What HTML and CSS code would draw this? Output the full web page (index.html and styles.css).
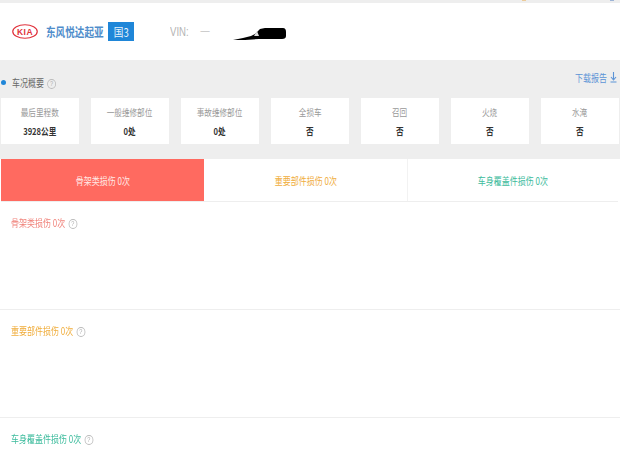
FILE: index.html
```html
<!DOCTYPE html>
<html lang="zh">
<head>
<meta charset="utf-8">
<title>车况概要</title>
<link rel="stylesheet" href="styles.css">
</head>
<body>
<div class="page">
  <div class="strip"><span class="mark mark-orange"></span><span class="mark mark-blue"></span></div>
  <header class="head">
    <svg class="logo" viewBox="0 0 52 30" width="26" height="15">
      <ellipse cx="26" cy="15" rx="24.5" ry="13.5" fill="none" stroke="#e0323c" stroke-width="2.4"/>
      <text x="26" y="22" text-anchor="middle" class="logo-text">KIA</text>
    </svg>
    <span class="brand"><span class="sq sq-left">东风悦达起亚</span></span>
    <span class="tag"><span class="sq">国3</span></span>
    <span class="vin"><span class="sq sq-left">VIN:</span></span>
    <span class="dash">一</span>
    <svg class="blot" viewBox="0 0 54 14" width="54" height="14">
      <path d="M0 13 L10 11 L18 9 L22 7 L27 2 L32 1 L50 1 Q53 1 53 5 L53 9 Q53 12 49 12 L26 12 L12 13 Z" fill="#000"/>
      <path d="M21 9 L24 4 L26 9 Z" fill="#ddd"/>
    </svg>
  </header>
  <section class="summary">
    <div class="summary-bar">
      <span class="dot"></span>
      <span class="sq sq-left summary-title">车况概要<span class="q">?</span></span>
      <a class="download"><span class="sq sq-right">下载报告</span><svg class="dl" viewBox="0 0 7 11" width="7" height="11"><path d="M3.5 0V7M1 5L3.5 8L6 5M0.5 10H6.5" fill="none" stroke="#5b93d6" stroke-width="1.1"/></svg></a>
    </div>
    <div class="cards">
      <div class="card"><span class="sq card-label">最后里程数</span><span class="sq card-value">3928公里</span></div>
      <div class="card"><span class="sq card-label">一般维修部位</span><span class="sq card-value">0处</span></div>
      <div class="card"><span class="sq card-label">事故维修部位</span><span class="sq card-value">0处</span></div>
      <div class="card"><span class="sq card-label">全损车</span><span class="sq card-value">否</span></div>
      <div class="card"><span class="sq card-label">召回</span><span class="sq card-value">否</span></div>
      <div class="card"><span class="sq card-label">火烧</span><span class="sq card-value">否</span></div>
      <div class="card"><span class="sq card-label">水淹</span><span class="sq card-value">否</span></div>
    </div>
  </section>
  <nav class="tabs">
    <div class="tab tab-red"><span class="sq">骨架类损伤 0次</span></div>
    <div class="tab tab-orange"><span class="sq">重要部件损伤 0次</span></div>
    <div class="tab tab-green"><span class="sq">车身覆盖件损伤 0次</span></div>
  </nav>
  <section class="block"><span class="sq sq-left block-title c-red">骨架类损伤 0次<span class="q">?</span></span></section>
  <section class="block"><span class="sq sq-left block-title c-orange">重要部件损伤 0次<span class="q">?</span></span></section>
  <section class="block block-last"><span class="sq sq-left block-title c-green">车身覆盖件损伤 0次<span class="q">?</span></span></section>
</div>
</body>
</html>
```
FILE: styles.css
```css
* { box-sizing: border-box; }
html, body { margin: 0; padding: 0; }
body {
  width: 620px;
  height: 465px;
  overflow: hidden;
  background: #fff;
  font-family: "Noto Sans CJK SC", "Liberation Sans", sans-serif;
}
.page { height: 465px; filter: blur(0.35px); }
.sq { display: inline-block; white-space: nowrap; transform: scaleX(0.8); }
.sq-left { transform-origin: left center; }
.sq-right { transform-origin: right center; }
.strip {
  height: 3px;
  background: #eee;
  display: flex;
}
.mark { height: 1px; width: 4px; }
.mark-orange { margin-left: 522px; background: #eccb9a; }
.mark-blue { margin-left: 84px; background: #9db4d6; }
.head {
  height: 57px;
  display: flex;
  align-items: center;
  padding: 0 0 0 12px;
  background: #fff;
}
.logo { flex: none; }
.logo-text { font: bold 17px "Liberation Sans", sans-serif; fill: #e0323c; letter-spacing: 1px; }
.brand { margin-left: 8px; width: 59px; font-size: 12px; font-weight: 700; color: #4f8dcb; }
.tag {
  margin-left: 3px;
  width: 26px;
  height: 19px;
  background: #1f86d8;
  color: #e8f3fc;
  font-size: 12px;
  line-height: 19px;
  text-align: center;
}
.vin { margin-left: 36px; width: 20px; font: 12px "Liberation Sans", sans-serif; color: #b4b4b4; }
.dash { margin-left: 10px; font-size: 10px; color: #c4c4c4; }
.blot { margin-left: 23px; margin-top: 4px; }
.summary { height: 99px; background: #eee; padding-left: 1px; }
.summary-bar {
  height: 38px;
  display: flex;
  align-items: center;
  padding: 6px 3px 0 0;
  margin-left: -1px;
  font-size: 10px;
  color: #666;
}
.dot { width: 5px; height: 5px; margin-left: 1px; border-radius: 50%; background: #1f86d8; }
.summary-title { margin-left: 6px; }
.q {
  display: inline-block;
  width: 11px;
  height: 10px;
  margin-left: 4px;
  vertical-align: 1px;
  border: 1px solid #bbb;
  border-radius: 50%;
  color: #aaa;
  font: 7px/8px "Liberation Sans", sans-serif;
  text-align: center;
}
.download { margin-left: auto; margin-top: -10px; font-size: 10px; color: #5b93d6; display: flex; align-items: center; gap: 3px; }
.dl { flex: none; }
.cards { display: flex; gap: 12px; width: 617px; }
.card {
  flex: none;
  width: 78px;
  height: 46px;
  background: #fff;
  display: flex;
  flex-direction: column;
  align-items: center;
  padding-top: 7px;
  gap: 5px;
}
.card-label { font-size: 9.5px; line-height: 14px; color: #999; }
.card-value { font-size: 9.5px; line-height: 14px; font-weight: 700; color: #333; }
.tabs {
  display: flex;
  height: 43px;
  margin: 0 2px 0 1px;
  border-bottom: 1px solid #eee;
  font-size: 10px;
}
.tab { display: flex; align-items: center; justify-content: center; background: #fff; }
.tab-red { width: 203px; background: #ff6a60; color: #ffe9e6; }
.tab-orange { width: 204px; color: #f0ad3c; border-right: 1px solid #f2f2f2; }
.tab-green { flex: 1; color: #3bbb9c; }
.block {
  height: 108px;
  padding: 14px 0 0 11px;
  border-bottom: 1px solid #eee;
  display: flex;
  align-items: flex-start;
  background: #fff;
  font-size: 10px;
}
.block-title { line-height: 14px; }
.block-last { border-bottom: 0; height: 47px; }
.c-red { color: #f0827a; }
.c-orange { color: #f0ad3c; }
.c-green { color: #3bbb9c; }
```
